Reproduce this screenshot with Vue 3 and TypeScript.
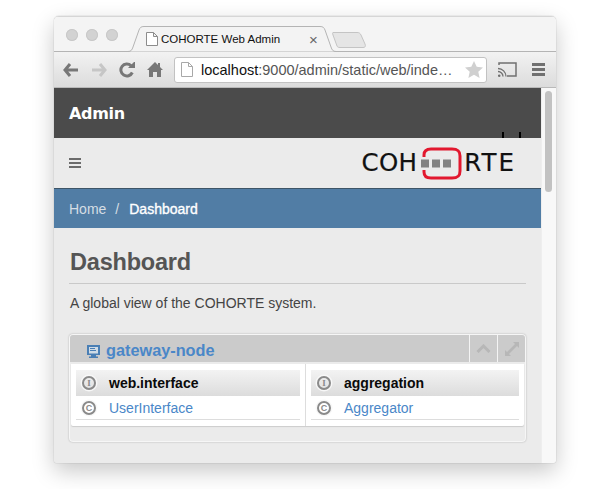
<script setup lang="ts">
const columns = [
  { iface: "web.interface", comp: "UserInterface" },
  { iface: "aggregation", comp: "Aggregator" },
];
</script>

<template>
  <div class="stage">
    <div class="window">
      <div class="tabstrip">
        <div class="lights"><i></i><i></i><i></i></div>
        <div class="tab">
          <svg class="tab-bg" width="216" height="26" viewBox="0 0 216 26">
            <path d="M0 25.500H4C7 25.500 8 24 9 21L15 4C16 1.500 17 .5 20 .5H196C199 .5 200 1.500 201 4L207 21C208 24 209 25.500 212 25.500H216" fill="#f3f3f3" stroke="#b4b4b4" />
          </svg>
          <svg class="doc" width="12" height="14" viewBox="0 0 12 14">
            <path d="M.5.5H7.500L11.500 4.500V13.500H.5ZM7.500.5V4.500H11.500" fill="#fff" stroke="#8c8c8c" />
          </svg>
          <span class="tab-title">COHORTE Web Admin</span>
          <span class="tab-close">×</span>
        </div>
        <svg class="newtab" width="34" height="18" viewBox="0 0 34 18">
          <path d="M1 1.500H25C27 1.500 28 2 29 4L33 13C34 15.500 33 16.500 31 16.500H8C6 16.500 5.500 16 5 15L1 4C.5 2.500 .5 1.500 1 1.500Z" fill="#e5e5e5" stroke="#c4c4c4" />
        </svg>
      </div>

      <div class="toolbar">
        <svg class="tb" width="16" height="14" viewBox="0 0 16 14"><path d="M7 1 2 7l5 6M2.500 7H15" fill="none" stroke="#777" stroke-width="3" /></svg>
        <svg class="tb fwd" width="16" height="14" viewBox="0 0 16 14"><path d="M9 1l5 6-5 6M13.500 7H1" fill="none" stroke="#c6c6c6" stroke-width="3" /></svg>
        <svg class="tb rel" width="16" height="16" viewBox="0 0 16 16"><path d="M13.300 10.500A6 6 0 1 1 12 3.600" fill="none" stroke="#777" stroke-width="3" /><path d="M9 6h7V-1Z" fill="#777" /></svg>
        <svg class="tb home" width="16" height="15" viewBox="0 0 16 15"><path d="M8 0 0 8h2v7h4v-5h4v5h4V8h2L13 5V1h-2v2Z" fill="#777" /></svg>
        <div class="omnibox">
          <svg class="doc" width="12" height="15" viewBox="0 0 12 15">
            <path d="M.5.5H7.500L11.500 4.500V14.500H.5ZM7.500.5V4.500H11.500" fill="#fff" stroke="#a8a8a8" />
          </svg>
          <span class="url"><b>localhost</b>:9000/admin/static/web/inde…</span>
          <svg width="18" height="17" viewBox="0 0 18 17"><path d="M9 0l2.700 5.800 6.300.7-4.700 4.200 1.300 6.300L9 13.800 3.400 17l1.300-6.300L0 6.500l6.300-.7Z" fill="#d0d0d0" /></svg>
        </div>
        <svg class="tb cast" width="19" height="15" viewBox="0 0 19 15">
          <path d="M1 3V1H18V14H9" fill="none" stroke="#707070" stroke-width="1.500" />
          <path d="M0 6.500a8 8 0 0 1 8 8M0 9.500a5 5 0 0 1 5 5" fill="none" stroke="#707070" stroke-width="1.300" />
          <circle cx="1.200" cy="13.700" r="1.300" fill="#707070" />
        </svg>
        <div class="menu"><i></i><i></i><i></i></div>
      </div>

      <div class="viewport">
        <div class="page">
          <header class="brandbar">
            <span class="brand">Admin</span>
            <span class="ticks"><i></i><i></i></span>
          </header>
          <nav class="navbar">
            <div class="burger"><i></i><i></i><i></i></div>
            <div class="logo">
              <span class="logo-text logo-start">COH</span>
              <div class="logo-mark">
                <svg width="41" height="33" viewBox="0 0 41 33">
                  <path d="M3 10V8C3 4 5 2 10 2H31C37 2 39 4 39 9V24C39 29 37 31 31 31H10C5 31 3 29 3 25V23" fill="none" stroke="#e2182f" stroke-width="3" />
                  <rect x="0" y="12.500" width="8" height="8" fill="#828282" />
                  <rect x="11" y="12.500" width="8" height="8" fill="#828282" />
                  <rect x="22" y="12.500" width="8" height="8" fill="#828282" />
                </svg>
              </div>
              <span class="logo-text logo-end">RTE</span>
            </div>
          </nav>
          <div class="crumbs">
            <span class="home-link">Home</span>
            <span class="sep">/</span>
            <span class="current">Dashboard</span>
          </div>

          <main class="content">
            <h1>Dashboard</h1>
            <p>A global view of the COHORTE system.</p>

            <section class="panel">
              <div class="panel-head">
                <svg class="node-ico" width="13" height="13" viewBox="0 0 13 13">
                  <path d="M0 0H13V10H9V11.500H11V13H2V11.500H4V10H0Z" fill="#4a7fb5" />
                  <path d="M2 2H11V8.500H2Z" fill="#cfdbe6" />
                  <path d="M3 3.500H8M3 5.500H9" stroke="#4a7fb5" />
                </svg>
                <span class="node-name">gateway-node</span>
                <div class="panel-tools">
                  <button class="tool">
                    <svg width="15" height="9" viewBox="0 0 15 9"><path d="M1.500 8 7.500 2l6 6" fill="none" stroke="#b7b7b7" stroke-width="3" /></svg>
                  </button>
                  <button class="tool">
                    <svg width="14" height="14" viewBox="0 0 14 14"><path d="M8 0h6v6l-2-2-8 8 2 2H0V8l2 2 8-8Z" fill="#b7b7b7" /></svg>
                  </button>
                </div>
              </div>
              <div class="panel-body">
                <div v-for="c in columns" :key="c.iface" class="col">
                  <div class="row row-iface">
                    <span class="badge badge-i">I</span>
                    <span class="iface">{{ c.iface }}</span>
                  </div>
                  <div class="row row-comp">
                    <span class="badge badge-c">C</span>
                    <span class="comp">{{ c.comp }}</span>
                  </div>
                </div>
              </div>
              <div class="panel-foot"></div>
            </section>
          </main>
        </div>
        <div class="scrollbar"><div class="thumb"></div></div>
      </div>
    </div>
  </div>
</template>

<style>
html, body { margin: 0; background: #fff; overflow: hidden; }
</style>

<style scoped>
.stage {
  width: 611px;
  height: 489px;
  box-sizing: border-box;
  padding: 16px 55px 0 54px;
  overflow: hidden;
  font-family: "Liberation Sans", Arial, sans-serif;
}
.window {
  height: 447px;
  display: flex;
  flex-direction: column;
  border-radius: 5px 5px 3px 3px;
  overflow: hidden;
  box-shadow: 0 0 1px rgba(0, 0, 0, .45), 0 8px 22px rgba(0, 0, 0, .22);
}

.tabstrip {
  height: 36px;
  box-sizing: border-box;
  display: flex;
  align-items: flex-end;
  background: #f4f4f4;
  border-top: 1px solid #d6d6d6;
  border-bottom: 1px solid #b4b4b4;
  flex: none;
}
.lights {
  display: flex;
  gap: 8px;
  align-self: flex-start;
  margin: 12px 0 0 12px;
}
.lights i { width: 12px; height: 12px; border-radius: 50%; background: #d2d2d2; box-shadow: inset 0 0 0 1px #c8c8c8; }
.tab {
  position: relative;
  width: 216px;
  height: 26px;
  margin: 0 0 -1px 6px;
  display: flex;
  align-items: center;
  padding: 0 0 0 22px;
  box-sizing: border-box;
  flex: none;
}
.tab-bg { position: absolute; left: 0; top: 0; }
.tab .doc, .tab-title, .tab-close { position: relative; }
.tab-title { margin-left: 3px; font-size: 11.500px; color: #111; width: 148px; white-space: nowrap; }
.tab-close { font-size: 15px; color: #666; line-height: 1; }
.newtab { margin: 0 0 2px -8px; flex: none; }

.toolbar {
  height: 36px;
  box-sizing: border-box;
  flex: none;
  display: flex;
  align-items: center;
  padding: 0 11px 0 9px;
  background: linear-gradient(#f2f2f2, #dcdcdc);
  border-bottom: 1px solid #b9b9b9;
}
.tb { flex: none; margin-right: 12px; }
.home { margin-right: 11px; }
.omnibox {
  width: 313px;
  height: 26px;
  box-sizing: border-box;
  flex: none;
  display: flex;
  align-items: center;
  padding: 0 3px 0 6px;
  background: #fff;
  border: 1px solid #c2c2c2;
  border-radius: 3px;
  margin-right: 11px;
}
.url {
  flex: 1;
  margin-left: 8px;
  font-size: 14.500px;
  color: #555;
  white-space: nowrap;
  overflow: hidden;
}
.url b { font-weight: 400; color: #111; }
.cast { margin-right: 15px; }
.menu { display: flex; flex-direction: column; gap: 2px; }
.menu i { width: 13px; height: 3px; background: #707070; }

.viewport { flex: 1; display: flex; min-height: 0; }
.page { width: 487px; flex: none; background: #ebebeb; display: flex; flex-direction: column; }
.scrollbar {
  flex: 1;
  background: #f8f8f8;
  border-left: 1px solid #eee;
  padding: 3px 4px 0 3px;
}
.thumb { height: 101px; border-radius: 4px; background: #c2c2c2; }

.brandbar {
  height: 50px;
  flex: none;
  position: relative;
  display: flex;
  align-items: center;
  padding: 0 0 0 15px;
  background: #4b4b4b;
}
.brand { font-family: "DejaVu Sans", sans-serif; font-weight: 700; font-size: 16px; color: #fff; letter-spacing: -.3px; }
.ticks { position: absolute; left: 448px; bottom: 0; display: flex; gap: 15px; }
.ticks i { width: 2px; height: 6px; background: #000; }

.navbar {
  height: 50px;
  flex: none;
  display: flex;
  align-items: center;
  justify-content: space-between;
  padding: 0 25px 0 15px;
  background: #ebebeb;
}
.burger { display: flex; flex-direction: column; gap: 2px; }
.burger i { width: 12px; height: 2px; background: #6b6b6b; }
.logo { display: flex; align-items: center; }
.logo-text {
  font-family: "DejaVu Sans", sans-serif;
  font-size: 24.500px;
  color: #111;
  line-height: 1;
  -webkit-text-stroke: .2px #111;
}
.logo-start { letter-spacing: .3px; }
.logo-end { letter-spacing: 2px; }
.logo-mark { display: flex; margin: 0 2px 0 4px; }

.crumbs {
  height: 40px;
  flex: none;
  box-sizing: border-box;
  display: flex;
  align-items: center;
  padding: 0 0 0 15px;
  background: #517da5;
  border-top: 1px solid #3e5567;
  font-size: 14px;
}
.home-link { color: #d5dde4; }
.sep { color: #d5dde4; margin: 0 9px; }
.current { color: #fff; margin-left: 1px; -webkit-text-stroke: .35px #fff; }

.content { padding: 0 15px; flex: 1; }
h1 {
  margin: 20px 0 0;
  padding: 0 0 7px 1px;
  font-size: 23.500px;
  letter-spacing: -.2px;
  line-height: 28px;
  font-weight: 700;
  color: #555;
  border-bottom: 1px solid #c9c9c9;
}
p { margin: 10px 0 0; padding-left: 1px; font-size: 14px; line-height: 18px; color: #444; }

.panel {
  margin: 23px 0 0 1px;
  width: 455px;
  box-sizing: border-box;
  border-radius: 3px;
  background: #ebebeb;
  box-shadow: 0 0 0 1px #f6f6f6, 0 0 2px 1px rgba(0, 0, 0, .28);
}
.panel-head {
  height: 27px;
  box-sizing: border-box;
  display: flex;
  align-items: center;
  padding-left: 17px;
  background: #cbcbcb;
  border-radius: 3px 3px 0 0;
}
.node-ico { margin: 5px 6px 0 0; }
.node-name { font-size: 16.300px; font-weight: 700; color: #4a87c8; margin-top: 3px; }
.panel-tools { margin-left: auto; display: flex; height: 100%; }
.tool {
  width: 28px;
  height: 100%;
  padding: 0;
  display: flex;
  align-items: center;
  justify-content: center;
  background: none;
  border: 0;
  border-left: 1px solid #f4f4f4;
}
.panel-body {
  margin: 2px 1px 0;
  display: grid;
  grid-template-columns: 234px 1fr;
  background: #fff;
  height: 62px;
  border-radius: 0 0 2px 2px;
  box-shadow: 0 1px 1px #ccc;
}
.col { padding: 6px 5px 0; }
.col + .col { border-left: 1px solid #ddd; }
.row { display: flex; align-items: center; }
.row-iface { height: 26px; background: linear-gradient(#f3f3f3, #dcdcdc); }
.row-comp { height: 24px; box-sizing: border-box; background: #fff; border-bottom: 1px solid #ddd; }
.badge {
  width: 14px;
  height: 14px;
  box-sizing: border-box;
  margin: 0 13px 0 6px;
  flex: none;
  border: 2px solid #8a8a8a;
  border-radius: 50%;
  display: flex;
  align-items: center;
  justify-content: center;
  box-shadow: 0 0 0 1.500px #f8f8f8;
  font-size: 9px;
  font-weight: 700;
  color: #8a8a8a;
}
.badge-i { font-family: "Liberation Serif", serif; }
.iface { font-size: 14px; font-weight: 700; color: #0a0a0a; }
.comp { font-size: 14px; color: #4a87c8; }
.panel-foot { height: 15px; }
</style>
